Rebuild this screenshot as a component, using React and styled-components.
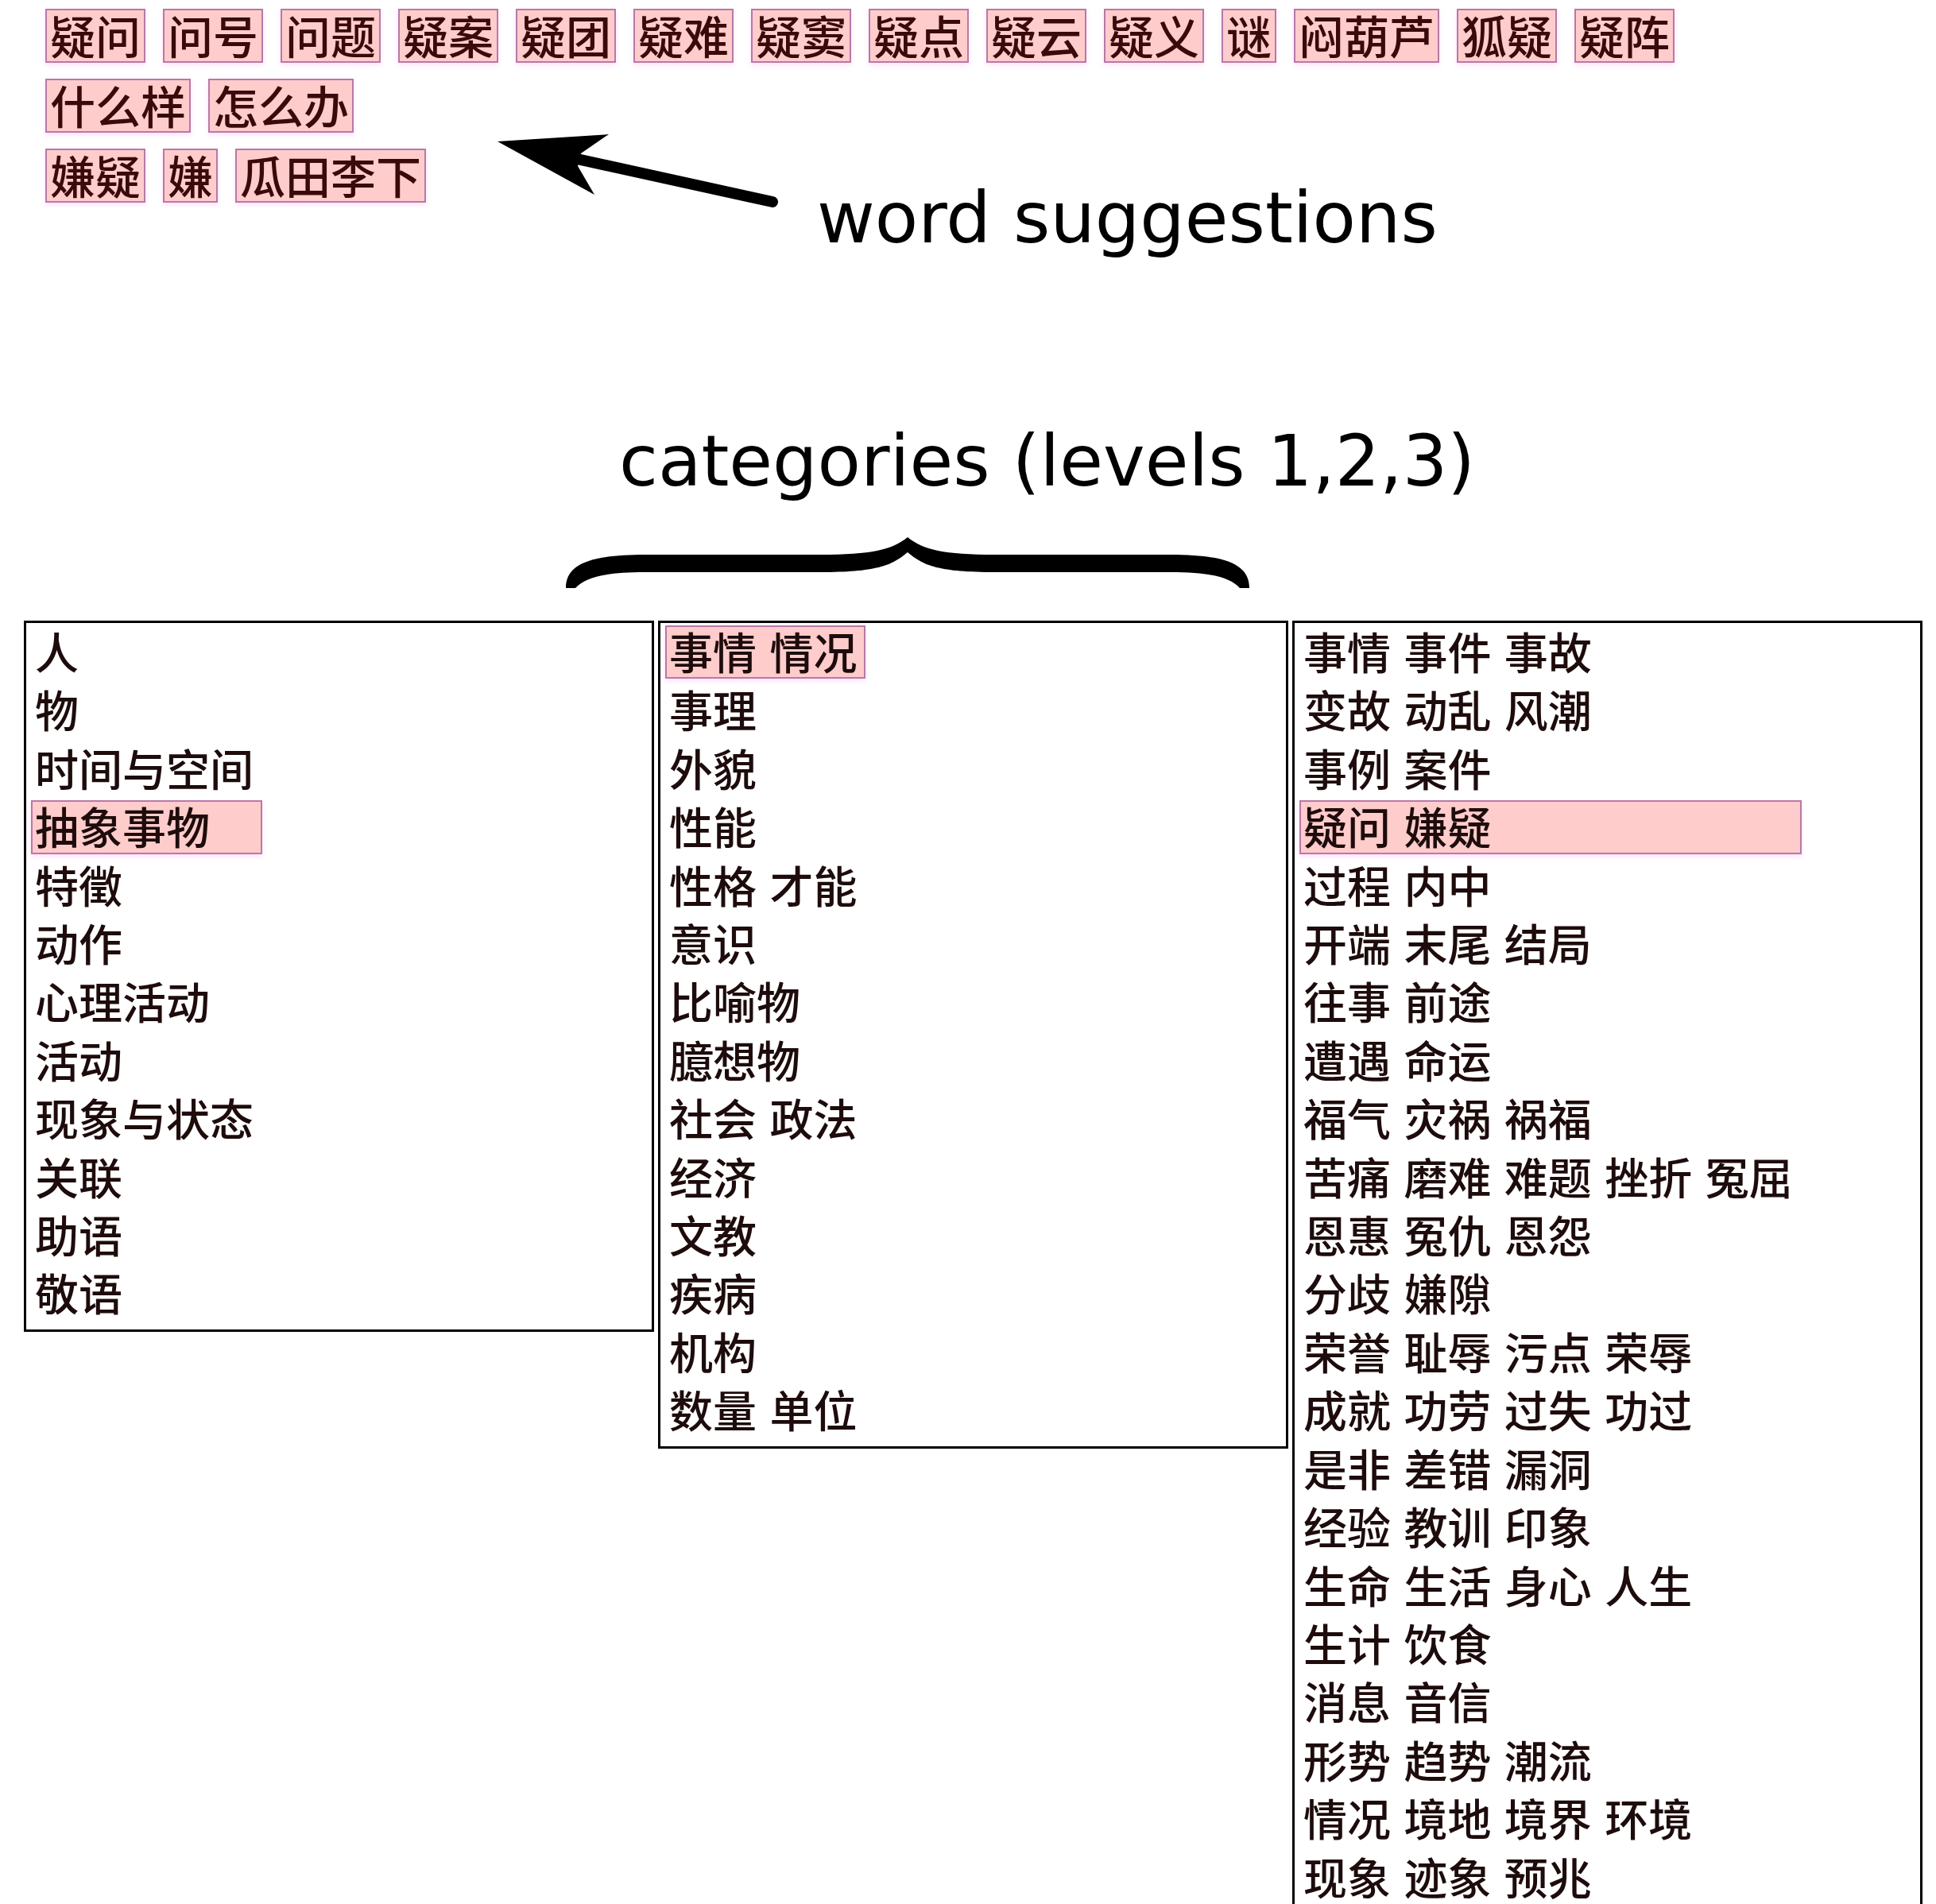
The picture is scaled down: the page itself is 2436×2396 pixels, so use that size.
import React from 'react';
import styled, { createGlobalStyle } from 'styled-components';

const GlobalStyle = createGlobalStyle`
  html, body {
    margin: 0;
    padding: 0;
    background: #ffffff;
    overflow: hidden;
  }
  body {
    font-family: "Noto Sans CJK SC", "Noto Sans", sans-serif;
  }
`;

const CJK = `"Noto Sans CJK SC", "Noto Sans CJK JP", sans-serif`;
const LATIN = `"DejaVu Sans", "Noto Sans", sans-serif`;

const Page = styled.div`
  width: 2436px;
  min-height: 2396px;
  background: #fff;
`;

const Header = styled.header`
  position: relative;
`;

const TagRows = styled.div`
  display: flex;
  flex-direction: column;
  gap: 20px;
  padding: 11px 0 0 57px;
`;

const TagRow = styled.div`
  display: flex;
  gap: 22px;
`;

const Tag = styled.span`
  display: inline-block;
  font-family: ${CJK};
  font-size: 57px;
  font-weight: 500;
  line-height: 60px;
  padding: 0 4px 4px;
  color: #3a0a0a;
  background: #ffcccc;
  border: 2px solid #b878a8;
  box-shadow: 0 3px 6px rgba(255, 170, 240, 0.35);
  white-space: nowrap;
`;

const ArrowSvg = styled.svg`
  position: absolute;
  left: 600px;
  top: 150px;
  width: 400px;
  height: 120px;
`;

const Note = styled.div`
  position: absolute;
  left: 1028px;
  top: 230px;
  font-family: ${LATIN};
  font-size: 89px;
  line-height: 89px;
  color: #000;
  white-space: nowrap;
`;

const Caption = styled.div`
  margin-top: 281px;
  padding-left: 779px;
  font-family: ${LATIN};
  font-size: 89px;
  line-height: 89px;
  color: #000;
  white-space: nowrap;
`;

const BraceSvg = styled.svg`
  display: block;
  margin: 51px 0 0 712px;
  width: 860px;
  height: 64px;
`;

const Columns = styled.div`
  display: grid;
  grid-template-columns: repeat(3, 793px);
  gap: 5px;
  align-items: start;
  margin: 41px 0 0 30px;
`;

const CategoryBox = styled.div`
  border: 3px solid #000;
  background: #fff;
  padding: 0 6px 8px;
`;

const ItemList = styled.div`
  display: inline-flex;
  flex-direction: column;
  align-items: stretch;
`;

const Item = styled.div`
  font-family: ${CJK};
  font-size: 55px;
  font-weight: 500;
  line-height: 58.4px;
  padding: 0 9px 5px 3px;
  margin: 3px 0;
  color: #1e0c0c;
  white-space: nowrap;
  word-spacing: 4px;
  border: 2px solid ${(p) => (p.$active ? '#b878a8' : 'transparent')};
  background: ${(p) => (p.$active ? '#ffcccc' : 'transparent')};
  box-shadow: ${(p) => (p.$active ? '0 3px 6px rgba(255, 170, 240, 0.35)' : 'none')};
`;

const tagRows = [
  ['疑问', '问号', '问题', '疑案', '疑团', '疑难', '疑窦', '疑点', '疑云', '疑义', '谜', '闷葫芦', '狐疑', '疑阵'],
  ['什么样', '怎么办'],
  ['嫌疑', '嫌', '瓜田李下'],
];

const columns = [
  {
    active: 3,
    items: ['人', '物', '时间与空间', '抽象事物', '特徵', '动作', '心理活动', '活动', '现象与状态', '关联', '助语', '敬语'],
  },
  {
    active: 0,
    items: ['事情 情况', '事理', '外貌', '性能', '性格 才能', '意识', '比喻物', '臆想物', '社会 政法', '经济', '文教', '疾病', '机构', '数量 单位'],
  },
  {
    active: 3,
    items: [
      '事情 事件 事故',
      '变故 动乱 风潮',
      '事例 案件',
      '疑问 嫌疑',
      '过程 内中',
      '开端 末尾 结局',
      '往事 前途',
      '遭遇 命运',
      '福气 灾祸 祸福',
      '苦痛 磨难 难题 挫折 冤屈',
      '恩惠 冤仇 恩怨',
      '分歧 嫌隙',
      '荣誉 耻辱 污点 荣辱',
      '成就 功劳 过失 功过',
      '是非 差错 漏洞',
      '经验 教训 印象',
      '生命 生活 身心 人生',
      '生计 饮食',
      '消息 音信',
      '形势 趋势 潮流',
      '情况 境地 境界 环境',
      '现象 迹象 预兆',
    ],
  },
];

function Arrow() {
  return (
    <ArrowSvg viewBox="600 150 400 120" aria-hidden="true">
      <line x1="726" y1="200" x2="972" y2="254" stroke="#000" strokeWidth="14" strokeLinecap="round" />
      <path d="M626,178 L766,169 L731,193 L727,209 L748,245 Z" fill="#000" />
    </ArrowSvg>
  );
}

function Brace() {
  return (
    <BraceSvg viewBox="0 0 860 64" aria-hidden="true">
      <path
        d="M0,64 C0,34 30,22 100,22 L320,22 C385,22 410,16 430,0 C450,16 475,22 540,22 L760,22 C830,22 860,34 860,64 L848,64 C835,50 810,44 760,44 L540,44 C470,44 450,36 430,19 C410,36 390,44 320,44 L100,44 C50,44 25,50 12,64 Z"
        fill="#000"
      />
    </BraceSvg>
  );
}

export default function App() {
  return (
    <Page>
      <GlobalStyle />
      <Header>
        <TagRows>
          {tagRows.map((row, i) => (
            <TagRow key={i}>
              {row.map((t) => (
                <Tag key={t}>{t}</Tag>
              ))}
            </TagRow>
          ))}
        </TagRows>
        <Arrow />
        <Note>word suggestions</Note>
      </Header>
      <Caption>categories (levels 1,2,3)</Caption>
      <Brace />
      <Columns>
        {columns.map((col, ci) => (
          <CategoryBox key={ci}>
            <ItemList>
              {col.items.map((it, ii) => (
                <Item key={ii} $active={ii === col.active}>
                  {it}
                </Item>
              ))}
            </ItemList>
          </CategoryBox>
        ))}
      </Columns>
    </Page>
  );
}
